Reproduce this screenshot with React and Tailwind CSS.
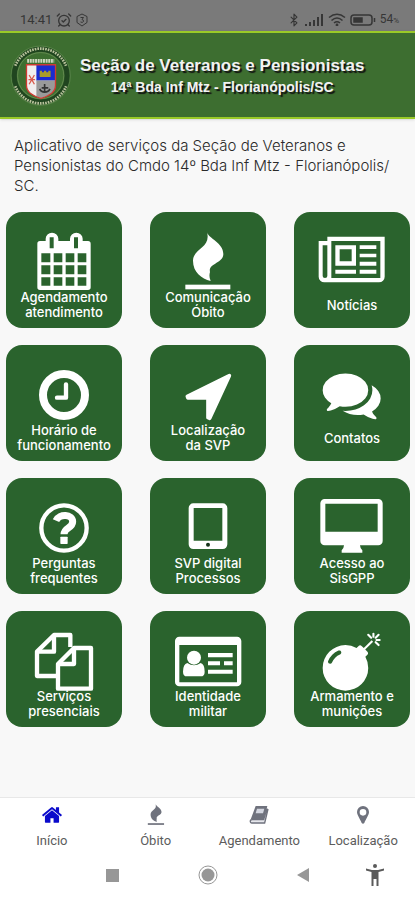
import { AlarmClockCheck, Bluetooth } from 'lucide-react';

const Flame = () => (
  <>
    <path d="M105 19 C110 38 154 50 154 84 C154 112 108 112 114 138 Q110 152 116 165 C88 158 63 138 63 104 C63 68 118 66 105 19 Z" />
    <rect x="40" y="176" width="135" height="14" />
  </>
);

const icons = {
  calendar: (
    <path
      fillRule="evenodd"
      d="M36 45H53V38a19 18 0 0 1 38 0V45H126V38a19 18 0 0 1 38 0V45H180a8 8 0 0 1 8 8V184a8 8 0 0 1-8 8H36a8 8 0 0 1-8-8V53a8 8 0 0 1 8-8z
      M65 34V67H77V34zM138 34V67H150V34z
      M40 82V109H67V82zM77 82V109H103V82zM113 82V109H139V82zM149 82V109H175V82z
      M40 118V145H67V118zM77 118V145H103V118zM113 118V145H139V118zM149 118V145H175V118z
      M40 154V179H67V154zM77 154V179H103V154zM113 154V179H139V154zM149 154V179H175V154z"
    />
  ),
  flame: <Flame />,
  news: (
    <path
      fillRule="evenodd"
      d="M8 45H34V32H206V152a17 17 0 0 1-17 17H25a17 17 0 0 1-17-17zM20 58V150q0 6 7 6t7-6V58zM46 45V156H193V45z
      M58 58H120V119H58zM71 70V106H107V70zM131 58H181V69H131zM131 83H181V94H131zM131 107H181V119H131zM131 131H181V143H131zM58 131H120V143H58z"
    />
  ),
  clock: (
    <>
      <circle cx="108" cy="108" r="63" fill="none" stroke="currentColor" strokeWidth="24" />
      <path d="M114 76V116H87" fill="none" stroke="currentColor" strokeWidth="13" strokeLinecap="round" strokeLinejoin="round" />
    </>
  ),
  arrow: <path d="M172 50L113 178L108 176V117H48L46 112Z" stroke="currentColor" strokeWidth="11" strokeLinejoin="round" />,
  chat: (
    <path
      transform="translate(20 19) scale(.0971)"
      d="M1408 768q0 139-94 257t-256.5 186.5-353.5 68.5q-86 0-176-16-124 88-278 128-36 9-86 16h-3q-11 0-20.5-8t-11.5-21q-1-3-1-6.5t.5-6.5 2-6l2.5-5 3.5-5.5 4-5 4.5-5 4-4.5q5-6 23-25t26-29.5 22.5-29 25-38.5 20.5-44q-124-72-195-177t-71-224q0-139 94-257t256.5-186.5 353.5-68.5 353.5 68.5 256.5 186.5 94 257zm384 256q0 120-71 224.5t-195 176.5q10 24 20.5 44t25 38.5 22.5 29 26 29.5 23 25q1 1 4 4.5t4.5 5 4 5 3.5 5.5l2.5 5 2 6 .5 6.5-1 6.5q-3 14-13 22t-22 7q-50-7-86-16-154-40-278-128-90 16-176 16-271 0-472-132 58 4 88 4 161 0 309-45t264-129q125-92 192-212t67-254q0-77-23-152 129 71 204 178t75 230z"
    />
  ),
  question: (
    <>
      <circle cx="108" cy="108" r="68" fill="none" stroke="currentColor" strokeWidth="13" />
      <path d="M84 86C94 64 134 66 134 89C134 109 108 106 108 127" fill="none" stroke="currentColor" strokeWidth="21" />
      <rect x="97" y="134" width="22" height="22" rx="2" />
    </>
  ),
  tablet: (
    <>
      <path fillRule="evenodd" d="M64 34H152a14 14 0 0 1 14 14V157a14 14 0 0 1-14 14H64a14 14 0 0 1-14-14V48a14 14 0 0 1 14-14zM65 48V146H151V48z" />
      <circle cx="108" cy="158" r="6" className="fill-[#16331a]" />
    </>
  ),
  desktop: (
    <path
      fillRule="evenodd"
      d="M26 21H187a13 13 0 0 1 13 13V147a13 13 0 0 1-13 13H132Q132 168 139 175V182H77V175Q84 168 84 160H26a13 13 0 0 1-13-13V34a13 13 0 0 1 13-13zM28 35V119H185V35z"
    />
  ),
  files: (
    <g fill="none" stroke="currentColor" strokeWidth="13" strokeLinejoin="round">
      <path d="M90 153H27V80L78 30H127V66" />
      <path d="M78 30V80H27" />
      <path d="M90 117L138 69H189V191H90Z" />
      <path d="M138 69V117H90" />
    </g>
  ),
  card: (
    <>
      <path fillRule="evenodd" d="M22 35H195a13 13 0 0 1 13 13V171a13 13 0 0 1-13 13H22a13 13 0 0 1-13-13V48a13 13 0 0 1 13-13zM22 60V172H195V60z" />
      <circle cx="66" cy="98" r="21" />
      <path d="M46 114Q66 128 86 114Q98 118 98 140Q98 154 86 154H45Q33 154 33 140Q33 118 46 114Z" />
      <path d="M108 84H182V97H108zM108 109H144V121H108zM156 109H182V121H156zM108 134H182V146H108z" />
    </>
  ),
  bomb: (
    <path
      transform="translate(20 23) scale(.0971)"
      d="M571 589q-10-25-34-35t-49 0q-108 44-191 127t-127 191q-10 25 0 49t35 34q13 5 24 5 42 0 60-40 34-84 98.5-148.5t148.5-98.5q25-11 35-35t0-49zm942-356l46 46-244 243 68 68q19 19 19 45.5t-19 45.5l-64 64q89 161 89 343 0 143-55.5 273.5t-150 225-225 150-273.5 55.5-273.5-55.5-225-150-150-225-55.5-273.5 55.5-273.5 150-225 225-150 273.5-55.5q182 0 343 89l64-64q19-19 45.5-19t45.5 19l68 68zm8-56q-10 10-22 10-13 0-23-10l-91-90q-9-10-9-23t9-23q10-9 23-9t23 9l90 91q10 9 10 22.5t-10 22.5zm230 230q-11 9-23 9t-23-9l-90-91q-10-9-10-22.5t10-22.5q9-10 22.5-10t22.5 10l91 90q9 10 9 23t-9 23zm41-183q0 14-9 23t-23 9h-96q-14 0-23-9t-9-23 9-23 23-9h96q14 0 23 9t9 23zm-192-192v96q0 14-9 23t-23 9-23-9-9-23v-96q0-14 9-23t23-9 23 9 9 23zm151 55l-91 90q-10 10-22 10-13 0-23-10-10-9-10-22.5t10-22.5l90-91q10-9 23-9t23 9q9 10 9 23t-9 23z"
    />
  ),
};

const tiles = [
  { icon: 'calendar', lines: ['Agendamento', 'atendimento'] },
  { icon: 'flame', lines: ['Comunicação', 'Óbito'] },
  { icon: 'news', lines: ['Notícias'] },
  { icon: 'clock', lines: ['Horário de', 'funcionamento'] },
  { icon: 'arrow', lines: ['Localização', 'da SVP'] },
  { icon: 'chat', lines: ['Contatos'] },
  { icon: 'question', lines: ['Perguntas', 'frequentes'] },
  { icon: 'tablet', lines: ['SVP digital', 'Processos'] },
  { icon: 'desktop', lines: ['Acesso ao', 'SisGPP'] },
  { icon: 'files', lines: ['Serviços', 'presenciais'] },
  { icon: 'card', lines: ['Identidade', 'militar'] },
  { icon: 'bomb', lines: ['Armamento e', 'munições'] },
];

const navItems = [
  {
    label: 'Início',
    active: true,
    icon: (
      <svg viewBox="0 0 1792 1792" className="size-[22px]" fill="currentColor">
        <path d="M1472 992v480q0 26-19 45t-45 19h-384v-384h-256v384h-384q-26 0-45-19t-19-45v-480q0-1 .5-3t.5-3l575-474 575 474q1 2 1 6zm223-69l-62 74q-8 9-21 11h-3q-13 0-21-7l-692-577-692 577q-12 8-24 7-13-2-21-11l-62-74q-8-10-7-23.5t11-21.5l719-599q32-26 76-26t76 26l244 204v-195q0-14 9-23t23-9h192q14 0 23 9t9 23v408l219 182q10 8 11 21.5t-7 23.5z" />
      </svg>
    ),
  },
  {
    label: 'Óbito',
    icon: (
      <svg viewBox="0 0 216 216" className="size-[26px]" fill="currentColor">
        <Flame />
      </svg>
    ),
  },
  {
    label: 'Agendamento',
    icon: (
      <svg viewBox="0 0 60 60" className="size-[20px]" fill="currentColor">
        <path d="M20 3H55L45 43H8Q3 43 3 49Z" />
        <path d="M24 11H46L42 25H20Z" fill="#d3d6e0" />
        <path d="M57 12L47 54H9Q3 54 4 47Q5 44 10 44H44L54 10" fill="#e6e7ec" stroke="currentColor" strokeWidth="4" strokeLinejoin="round" />
      </svg>
    ),
  },
  {
    label: 'Localização',
    icon: (
      <svg viewBox="0 0 60 60" className="size-[20px]" fill="currentColor">
        <path fillRule="evenodd" d="M30 3A18 18 0 0 1 48 21C48 30 38 43 34 54Q30 59 26 54C22 43 12 30 12 21A18 18 0 0 1 30 3ZM30 12A10 10 0 1 0 30 32A10 10 0 1 0 30 12Z" />
      </svg>
    ),
  },
];

function Crest() {
  return (
    <svg viewBox="30 120 188 192" className="h-16 w-[62px] shrink-0" fill="none">
      <circle cx="123" cy="218" r="90" fill="#3d6e30" stroke="#8ba878" strokeWidth="1" />
      <circle cx="123" cy="218" r="80" stroke="#20451f" strokeWidth="15" />
      <path d="M46 188A83 83 0 0 1 200 188" stroke="#b9c29c" strokeWidth="8" strokeDasharray="5 3" />
      <path d="M46 250A83 83 0 0 0 200 250" stroke="#b9c29c" strokeWidth="8" strokeDasharray="5 3" />
      <circle cx="123" cy="218" r="70" stroke="#76975f" strokeWidth="2" />
      <path d="M82 173H164" stroke="#cdd8bf" strokeWidth="11" strokeDasharray="6 2" />
      <path d="M80 185H168V248C168 268 148 280 124 287C100 280 80 268 80 248Z" fill="#f1eeee" />
      <path d="M110 185H168V233H110Z" fill="#1a2bd0" />
      <path d="M110 233H168V248C168 267 150 279 124 286L110 281Z" fill="#9a9a9a" />
      <path d="M120 203H127V208H133V203H140V208H146V203H153V222H120Z" fill="#a99c28" />
      <path d="M135 243V267M120 258Q124 268 135 268Q147 268 151 258M126 255H146" stroke="#333" strokeWidth="5" />
      <path d="M88 216L104 244M104 216L88 244M86 230H106" stroke="#d95a4c" strokeWidth="4" />
      <path d="M80 185H168V248C168 268 148 280 124 287C100 280 80 268 80 248Z" stroke="#cf3a32" strokeWidth="4" />
    </svg>
  );
}

function StatusBar() {
  return (
    <div className="flex h-[31px] items-center justify-between bg-[#7a7a7a] pt-2 pr-4 pl-5 font-['Roboto',sans-serif] text-[13px] leading-4 text-[#363636]">
      <div className="flex items-center gap-1">
        <span>14:41</span>
        <AlarmClockCheck size={16} />
        <svg viewBox="0 0 12 14" className="h-[14px] w-3" fill="none" stroke="currentColor">
          <path d="M6 1L11 3.5V9.5L6 13L1 9.5V3.5Z" />
          <path d="M4.500 4.500H7.500L6 6.500Q8 7 7.500 8.500Q6.500 10 4.500 9" />
        </svg>
      </div>
      <div className="flex items-center gap-1">
        <Bluetooth size={14} />
        <svg viewBox="0 0 19 12" className="h-3 w-[19px]" fill="currentColor">
          <path d="M0 10h2v2H0zM4 8h2v4H4zM8 6h2v6H8zM12 3h2v9h-2zM16 0h2v12h-2z" />
        </svg>
        <svg viewBox="0 0 18 13" className="h-[13px] w-[18px]" fill="none" stroke="currentColor" strokeWidth="1.6">
          <path d="M1 4.500Q9-2 17 4.500M3.500 7.500Q9 2.500 14.500 7.500M6 10Q9 7.500 12 10" />
          <circle cx="9" cy="12" r=".6" />
        </svg>
        <svg viewBox="0 0 26 12" className="h-3 w-[26px]" fill="none" stroke="currentColor" strokeWidth="1.5">
          <rect x="1" y="1" width="21" height="10" rx="3" />
          <rect x="4" y="4" width="8" height="4" fill="currentColor" />
          <path d="M24.500 4V8" />
        </svg>
        <span className="text-[12px]">
          54<span className="text-[8px]">%</span>
        </span>
      </div>
    </div>
  );
}

export default function App() {
  return (
    <div className="flex min-h-screen flex-col bg-[#f8f8f8] font-['Inter',sans-serif]">
      <StatusBar />

      <header className="flex h-[88px] items-center border-y-2 border-[#9aca28] bg-[#3d6e30] pl-[10px] text-[#f2f2f2] shadow-sm">
        <Crest />
        <div className="ml-2 text-center font-['Liberation_Sans',sans-serif] font-bold whitespace-nowrap [text-shadow:2px_2px_1px_#111]">
          <h1 className="text-[17px] leading-6">Seção de Veteranos e Pensionistas</h1>
          <p className="text-[14px] leading-[18px]">14ª Bda Inf Mtz - Florianópolis/SC</p>
        </div>
      </header>

      <main className="pt-[17px] pb-6">
        <p className="px-[14px] text-[15px] leading-5 font-light text-[#2a2a2a]">
          Aplicativo de serviços da Seção de Veteranos e Pensionistas do Cmdo 14º Bda Inf Mtz - Florianópolis/<wbr />SC.
        </p>
        <div className="mt-4 grid grid-cols-3 gap-x-7 gap-y-[17px] pr-[5px] pl-[6px]">
          {tiles.map(({ icon, lines }) => (
            <button key={icon} type="button" className="flex aspect-square flex-col items-center rounded-2xl bg-[#2a632d] pt-[14px] text-white">
              <svg viewBox="0 0 216 216" className="size-[72px] shrink-0" fill="currentColor">
                {icons[icon]}
              </svg>
              <span className="-mt-2 flex h-[30px] flex-col justify-center text-[13px] leading-[15px] font-medium whitespace-nowrap">
                {lines.map((line) => (
                  <span key={line}>{line}</span>
                ))}
              </span>
            </button>
          ))}
        </div>
      </main>

      <footer className="mt-auto">
        <nav className="grid h-[53px] grid-cols-4 border-t border-[#e8e8e8] bg-white font-['Roboto',sans-serif]">
          {navItems.map(({ label, active, icon }) => (
            <a key={label} href="#" className="flex flex-col items-center pt-[5px] text-[13px] leading-4 text-[#5c5c5c]">
              <span className={active ? 'flex h-6 items-center text-[#0a0acb]' : 'flex h-6 items-center text-[#6f727d]'}>{icon}</span>
              <span className="mt-[6px]">{label}</span>
            </a>
          ))}
        </nav>
        <div className="grid h-[50px] grid-cols-[1fr_95px_95px_95px_1fr] items-center bg-white text-[#979797]">
          <button type="button" aria-label="Recentes" className="col-start-2 justify-self-center">
            <svg viewBox="0 0 13 13" className="size-[13px]" fill="currentColor"><rect width="13" height="13" /></svg>
          </button>
          <button type="button" aria-label="Tela inicial" className="justify-self-center">
            <svg viewBox="0 0 20 20" className="size-5" fill="currentColor">
              <circle cx="10" cy="10" r="9" fill="none" stroke="currentColor" />
              <circle cx="10" cy="10" r="6.500" />
            </svg>
          </button>
          <button type="button" aria-label="Voltar" className="justify-self-center">
            <svg viewBox="0 0 12 14" className="h-[14px] w-3" fill="currentColor"><path d="M12 0V14L0 7Z" /></svg>
          </button>
          <button type="button" aria-label="Acessibilidade" className="ml-4 text-[#5a5a5a]">
            <svg viewBox="0 0 18 22" className="h-[22px] w-[18px]" fill="currentColor">
              <circle cx="9" cy="2" r="2" />
              <path d="M0 4.500L6 6H12L18 4.500V6.500L12.500 8V22H10.500V15H7.500V22H5.500V8L0 6.500Z" />
            </svg>
          </button>
        </div>
      </footer>
    </div>
  );
}
